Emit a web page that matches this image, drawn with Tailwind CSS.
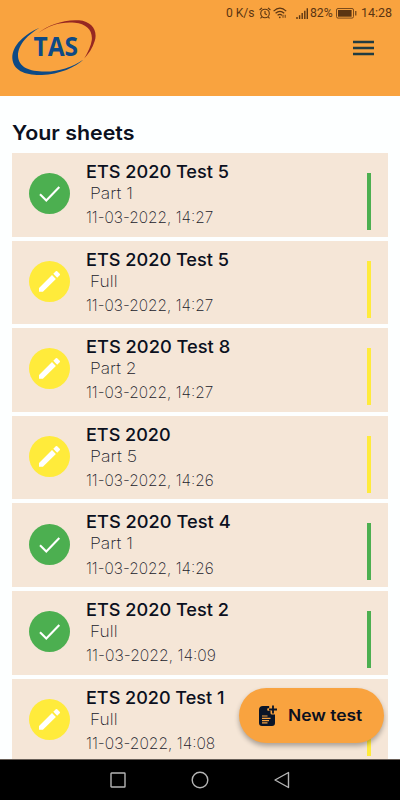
<!DOCTYPE html>
<html lang="en">
<head>
<meta charset="utf-8">
<title>Your sheets</title>
<script src="https://cdn.jsdelivr.net/npm/@tailwindcss/browser@4"></script>
</head>
<body class="w-[400px] h-[800px] overflow-hidden bg-[#fdffff] font-['Inter',sans-serif] text-[#0b1020]">
<div class="relative flex flex-col h-[800px] overflow-hidden">
  <header class="h-24 shrink-0 bg-[#f9a33f]">
    <div class="flex h-6 items-center pl-[226px] pt-[2px] text-[#5b3512] font-['Roboto',sans-serif] text-[12.5px] leading-none whitespace-nowrap">
      <span class="w-[33px] shrink-0"><span data-w="29">0 K/s</span></span>
      <svg class="w-3 h-3 shrink-0" viewBox="0 0 12 12" fill="none" stroke="currentColor" stroke-width="1.1"><circle cx="6" cy="6.5" r="4.3"/><path d="M6 4v2.8l1.8 1M.6 3 3 .8M11.4 3 9 .8M2.7 10 1.5 11.3M9.3 10l1.2 1.3"/></svg>
      <svg class="w-[14px] h-3 shrink-0 ml-[2px]" viewBox="0 0 14 12" fill="none" stroke="currentColor" stroke-width="1.2"><path d="M.6 4.1Q7-1.7 13.2 4.1M2.6 6.3Q7 2.3 11.2 6.3M4.6 8.3Q7 6.3 9 8.3"/><circle cx="6.8" cy="10.3" r=".9" fill="currentColor" stroke="none"/><path d="M10 7.8v3M12.2 7.8v3" stroke-width=".9"/></svg>
      <svg class="w-3 h-[11px] shrink-0 ml-[9px]" viewBox="0 0 12 11" fill="none" stroke="currentColor" stroke-width="1.4"><path d="M1 11V9M3.6 11V7.2M6.2 11V5M8.8 11V2.7M11.3 11V.2"/></svg>
      <span class="ml-[2px] w-[26px] shrink-0"><span data-w="22.5">82%</span></span>
      <svg class="w-[21px] h-[11px] shrink-0" viewBox="0 0 21 11" fill="none" stroke="currentColor"><rect x=".5" y=".5" width="17" height="9.6" rx="1.5" stroke-width=".8"/><path d="M2 2h13.6v6.7H2z" fill="currentColor" stroke="none"/><path d="M19.8 3v4.6" stroke-width="1.1"/></svg>
      <span class="ml-[4px]"><span data-w="31">14:28</span></span>
    </div>
    <div class="flex justify-between pl-3 pr-[26px] -mt-[4px]">
      <svg class="w-[84px] h-14" viewBox="12 20 84 56">
        <path d="M38 33.2C48 25 64 19.2 79 20.3C92 21.5 98 31 94.7 41C92.700 48 88.500 54 84.200 58.500C88 52 91 46 91.800 40C92.800 30 86 24 75 22.800C61 21.500 49 25.500 38 33.200Z" fill="#962822"/>
        <path d="M39.500 27.700C25 34 12 45 12.300 58C13 71 26 75.500 42 75C59 74.500 76 67 83.500 59.500C72 67.500 58 71.800 45 71.600C29 71.500 18.500 67 18 56C17.800 44 29 34 39.500 27.700Z" fill="#0e4a85"/>
        <text x="33.500" y="55.800" textLength="44.500" lengthAdjust="spacingAndGlyphs" class="font-['Open_Sans',sans-serif] font-bold text-[26px]" fill="#0e4a85">TAS</text>
      </svg>
      <svg class="w-[21px] h-4 mt-5" viewBox="0 0 21 16" fill="none" stroke="#213c42" stroke-width="2.400"><path d="M0 2h21M0 8h21M0 14h21"/></svg>
    </div>
  </header>
  <main class="flex-1 min-h-0 px-3 pt-[23px] overflow-hidden">
    <h1 class="h-[34px] pt-[2px] text-[20px] leading-[24px] font-semibold whitespace-nowrap"><span data-w="122">Your sheets</span></h1>
    <div id="list" class="flex flex-col gap-[4px]"></div>
  </main>
  <button class="absolute left-[239px] top-[688px] w-[145px] h-[55px] rounded-full bg-[#f9a33f] shadow-[0_3px_5px_rgba(0,0,0,0.3)] flex items-center pl-5 whitespace-nowrap">
    <svg class="w-[20px] h-[22px] shrink-0" viewBox="0 0 20 22"><path d="M4 1h6.200v2.200H9q-.8 0-.8 1.300t.8 1.300h2.500V8q0 1.500 1.500 1.500h3V18q0 3-3 3H3Q0 21 0 18V5Q0 1 4 1Z" fill="#0b1528"/><path d="M3 11h5.500M3 13.300h8.500M3 15.600h7M3 17.900h5.500" stroke="#f9a33f" stroke-width="1.200"/><path d="M14 .5v8M10 4.500h8" stroke="#0b1528" stroke-width="1.800"/></svg>
    <span class="ml-[9px] pb-[2px] text-[16px] font-semibold leading-5"><span data-w="74">New test</span></span>
  </button>
  <nav class="h-[41px] shrink-0 bg-black border-t border-[#685f58] flex items-center justify-between pl-[110px] pr-[110px]">
    <svg class="w-4 h-4" viewBox="0 0 16 16" fill="none" stroke="#b5b5b5" stroke-width="1.400"><rect x="1" y="1" width="14" height="14" rx=".5"/></svg>
    <svg class="w-[18px] h-[18px]" viewBox="0 0 18 18" fill="none" stroke="#b5b5b5" stroke-width="1.400"><circle cx="9" cy="9" r="7.800"/></svg>
    <svg class="w-4 h-[18px]" viewBox="0 0 16 18" fill="none" stroke="#b5b5b5" stroke-width="1.400" stroke-linejoin="round"><path d="M14.500 1.500v15L1 9Z"/></svg>
  </nav>
</div>
<script>
const check = '<svg class="w-[41px] h-[41px]" viewBox="0 0 41 41"><circle cx="20.500" cy="20.500" r="20.500" fill="#4caf50"/><path d="m11 21.200 6.300 6.300L30.300 14" fill="none" stroke="#fff" stroke-width="2.100"/></svg>';
const pencil = '<svg class="w-[41px] h-[41px]" viewBox="0 0 41 41"><circle cx="20.500" cy="20.500" r="20.500" fill="#ffeb3b"/><path d="M10 26.900v3.900h3.900L26.900 18l-3.900-3.900ZM24.300 12.800 28.200 16.700 30.700 14.200q.7-.7 0-1.400l-2.500-2.500q-.7-.7-1.400 0Z" fill="#fff"/></svg>';
const sheets = [
  ['ETS 2020 Test 5', 143, 'Part 1', 43, '14:27', 127, true],
  ['ETS 2020 Test 5', 143, 'Full', 28, '14:27', 127, false],
  ['ETS 2020 Test 8', 144, 'Part 2', 47, '14:27', 127, false],
  ['ETS 2020', 84.5, 'Part 5', 47, '14:26', 128, false],
  ['ETS 2020 Test 4', 145, 'Part 1', 43, '14:26', 128, true],
  ['ETS 2020 Test 2', 143, 'Full', 28, '14:09', 129.5, true],
  ['ETS 2020 Test 1', 138, 'Full', 28, '14:08', 129.5, false],
];
document.getElementById('list').innerHTML = sheets.map(([title, tw, part, pw, time, dw, done]) => `
  <section class="flex h-[83.6px] shrink-0 bg-[#f5e6d7] pl-[16.500px] pr-[16.600px] whitespace-nowrap">
    <div class="pt-[20.200px] w-[57px] shrink-0">${done ? check : pencil}</div>
    <div class="flex-1 pt-[8px]">
      <h2 class="text-[17.5px] leading-[22px] font-medium"><span data-w="${tw}">${title}</span></h2>
      <p class="pl-[4px] pt-[1px] text-[15.5px] leading-[20px] font-extralight text-[#20202a]"><span data-w="${pw}">${part}</span></p>
      <p class="pt-[3.200px] text-[15.5px] leading-[21px] font-extralight text-[#20202a]"><span data-w="${dw}">11-03-2022, ${time}</span></p>
    </div>
    <i class="block mt-[20px] h-[57px] w-[4px] ${done ? 'bg-[#4caf50]' : 'bg-[#ffeb3b]'}"></i>
  </section>`).join('');
// Stretch each label horizontally to its design width, again whenever its natural width changes.
const fit = el => { el.style.transform = `scaleX(${el.dataset.w / el.offsetWidth})`; };
const observer = new ResizeObserver(entries => entries.forEach(e => fit(e.target)));
const labels = document.querySelectorAll('[data-w]');
labels.forEach(el => {
  el.style.display = 'inline-block';
  el.style.transformOrigin = 'left';
  fit(el);
  observer.observe(el);
});
addEventListener('load', () => labels.forEach(fit));
</script>
</body>
</html>
